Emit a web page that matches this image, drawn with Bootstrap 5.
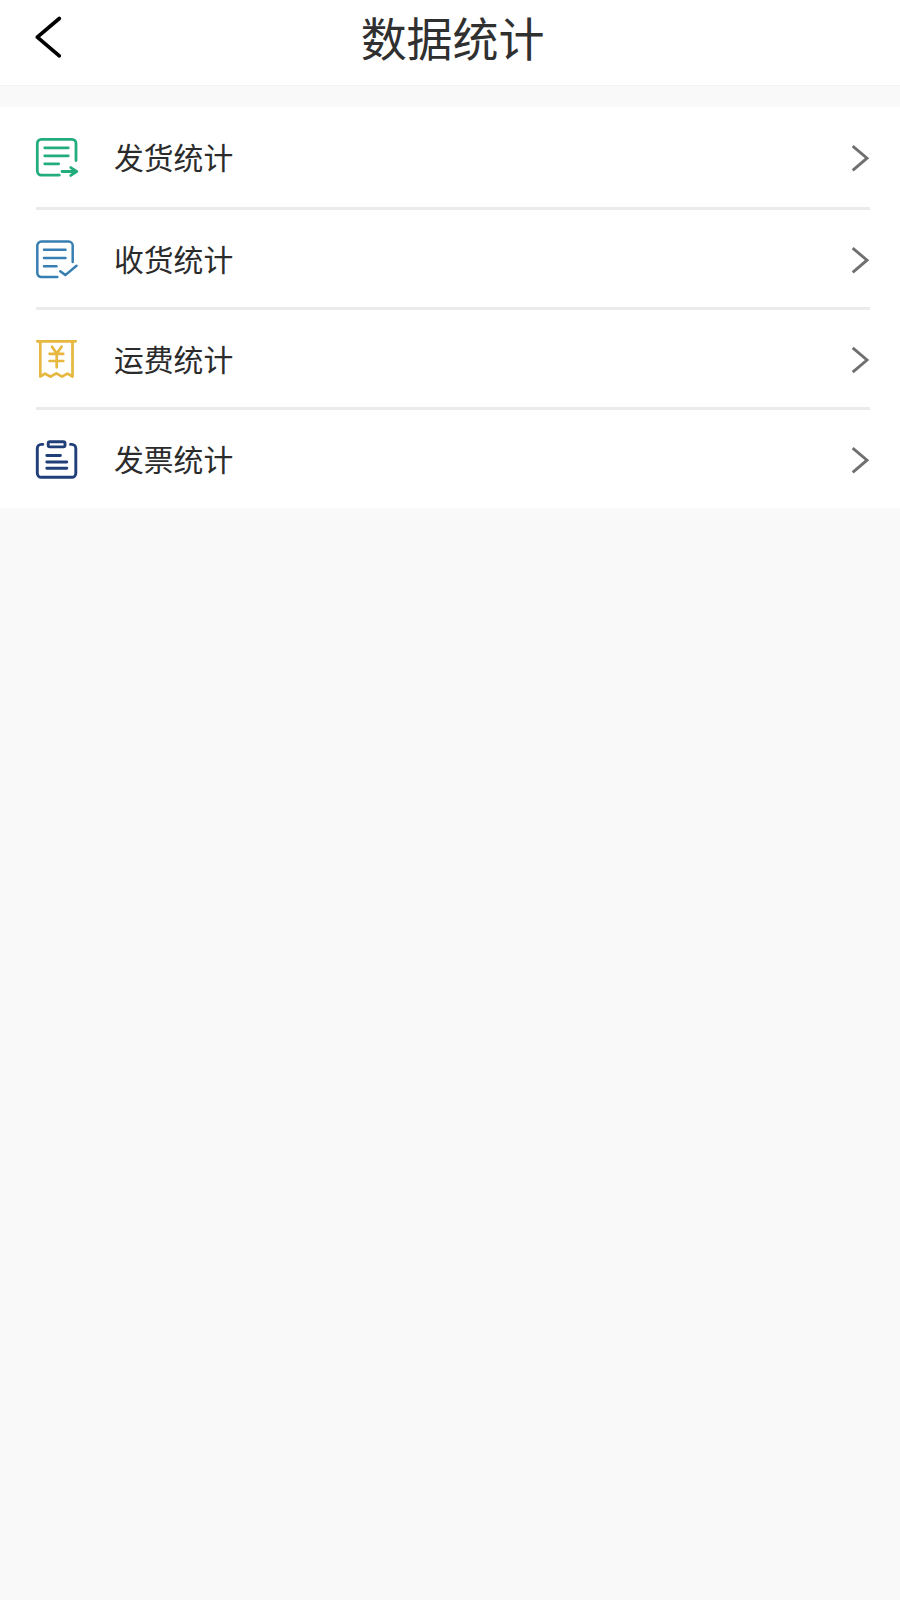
<!DOCTYPE html>
<html lang="zh-CN">
<head>
<meta charset="utf-8">
<meta name="viewport" content="width=device-width, initial-scale=1">
<title>数据统计</title>
<link href="https://cdn.jsdelivr.net/npm/bootstrap@5.3.0/dist/css/bootstrap.min.css" rel="stylesheet">
<style>
body{background:#f9f9f9;font-family:"Noto Sans CJK SC",sans-serif;color:#2b2b2b;min-height:1600px}
svg{fill:none;stroke:currentColor;stroke-linecap:round;stroke-linejoin:round;display:block;flex:none}
.topbar{height:85px;padding:0 36px 9px 32px}
.topbar .title-text{font-size:46px;line-height:60px;letter-spacing:-.1px;color:#303030;margin:0;padding:0 0 4px 9px}
.side{width:32px}
.gap-band{height:22px;background:#f9f9f9;border-top:1px solid #f3f3f3}
.stat-row{height:100px;padding:0 30px 0 32px;color:#2b2b2b;position:relative}
.stat-row:first-child{height:103px}
.stat-row:last-child{height:98px}
.stat-row:not(:last-child){padding-bottom:2px}
.stat-row:not(:last-child)::after{content:"";position:absolute;left:36px;right:30px;bottom:0;height:3px;background:#ebebeb}
.stat-name{font-size:29.8px;line-height:44px;margin-left:34px;padding-bottom:2px}
.stat-row:first-child .stat-name{padding-bottom:4px}
.chev{color:#707070;stroke-linecap:butt;stroke-linejoin:miter}
</style>
</head>
<body>
<header class="topbar bg-white d-flex align-items-center justify-content-between">
  <a href="#" class="side text-black" aria-label="返回"><svg width="32" height="48" viewBox="0 0 32 48" stroke-width="3.7"><path d="M27.3 4.5 5.3 23.2 27.3 41.9"/></svg></a>
  <h1 class="title-text fw-normal">数据统计</h1>
  <span class="side"></span>
</header>
<div class="gap-band"></div>
<nav class="bg-white">
  <a href="#" class="stat-row d-flex align-items-center text-decoration-none">
    <svg width="48" height="48" viewBox="0 0 48 48" stroke-width="2.8" style="color:#24ad7c"><path d="M27.3 41.1H9.3a4 4 0 0 1-4-4V9.4a4 4 0 0 1 4-4H40a4 4 0 0 1 4 4V26.6M12.7 13.8h23.6M12.7 21.8h23.6M12.7 29.8h14M30 37.5h14.5M38.8 33.6l5.9 3.9-5.9 3.9"/></svg>
    <span class="stat-name">发货统计</span>
    <svg class="chev ms-auto" width="20" height="30" viewBox="0 0 20 30" stroke-width="2.9"><path d="M2.7 3.1 17 15.2 2.7 27.3"/></svg>
  </a>
  <a href="#" class="stat-row d-flex align-items-center text-decoration-none">
    <svg width="48" height="48" viewBox="0 0 48 48" stroke-width="2.5" style="color:#377fb2"><path d="M25.3 42H9.3a4 4 0 0 1-4-4V10.6a4 4 0 0 1 4-4h27.4a4 4 0 0 1 4 4V27M12 14.7h21.5M12 23h21.5M12 31.2h12.5M28.3 36.3l5 3.8 11.2-9.4"/></svg>
    <span class="stat-name">收货统计</span>
    <svg class="chev ms-auto" width="20" height="30" viewBox="0 0 20 30" stroke-width="2.9"><path d="M2.7 4.1 17 16.2 2.7 28.3"/></svg>
  </a>
  <a href="#" class="stat-row d-flex align-items-center text-decoration-none">
    <svg width="48" height="48" viewBox="0 0 48 48" stroke-width="2.7" style="color:#e7b83f"><path d="M5.3 6.3h38.4M8.3 6.3v35.2l4.7-2.9 5.6 3.1 5.7-3.3 5.7 3.3 5.4-3.1 5.1 2.9V6.3M20 11.7l4.7 6.8 4.9-6.8M17.5 18.8h13.8M17.5 26h13.8M24.7 18.8v13.5"/></svg>
    <span class="stat-name">运费统计</span>
    <svg class="chev ms-auto" width="20" height="30" viewBox="0 0 20 30" stroke-width="2.9"><path d="M2.7 3.9 17 16 2.7 28.1"/></svg>
  </a>
  <a href="#" class="stat-row d-flex align-items-center text-decoration-none">
    <svg width="48" height="48" viewBox="0 0 48 48" stroke-width="2.9" style="color:#203f78"><path d="M10.8 9.4H9.3a4 4 0 0 0-4 4v24.9a4 4 0 0 0 4 4h30.5a4 4 0 0 0 4-4V13.4a4 4 0 0 0-4-4h-1.3M14.8 20.5h13.6M14.8 27h20M14.8 33.3h20"/><rect x="16.2" y="6.7" width="16.8" height="5.2" rx="1.6"/></svg>
    <span class="stat-name">发票统计</span>
    <svg class="chev ms-auto" width="20" height="30" viewBox="0 0 20 30" stroke-width="2.9"><path d="M2.7 4.1 17 16.2 2.7 28.3"/></svg>
  </a>
</nav>
<script src="https://cdn.jsdelivr.net/npm/bootstrap@5.3.0/dist/js/bootstrap.bundle.min.js"></script>
</body>
</html>
